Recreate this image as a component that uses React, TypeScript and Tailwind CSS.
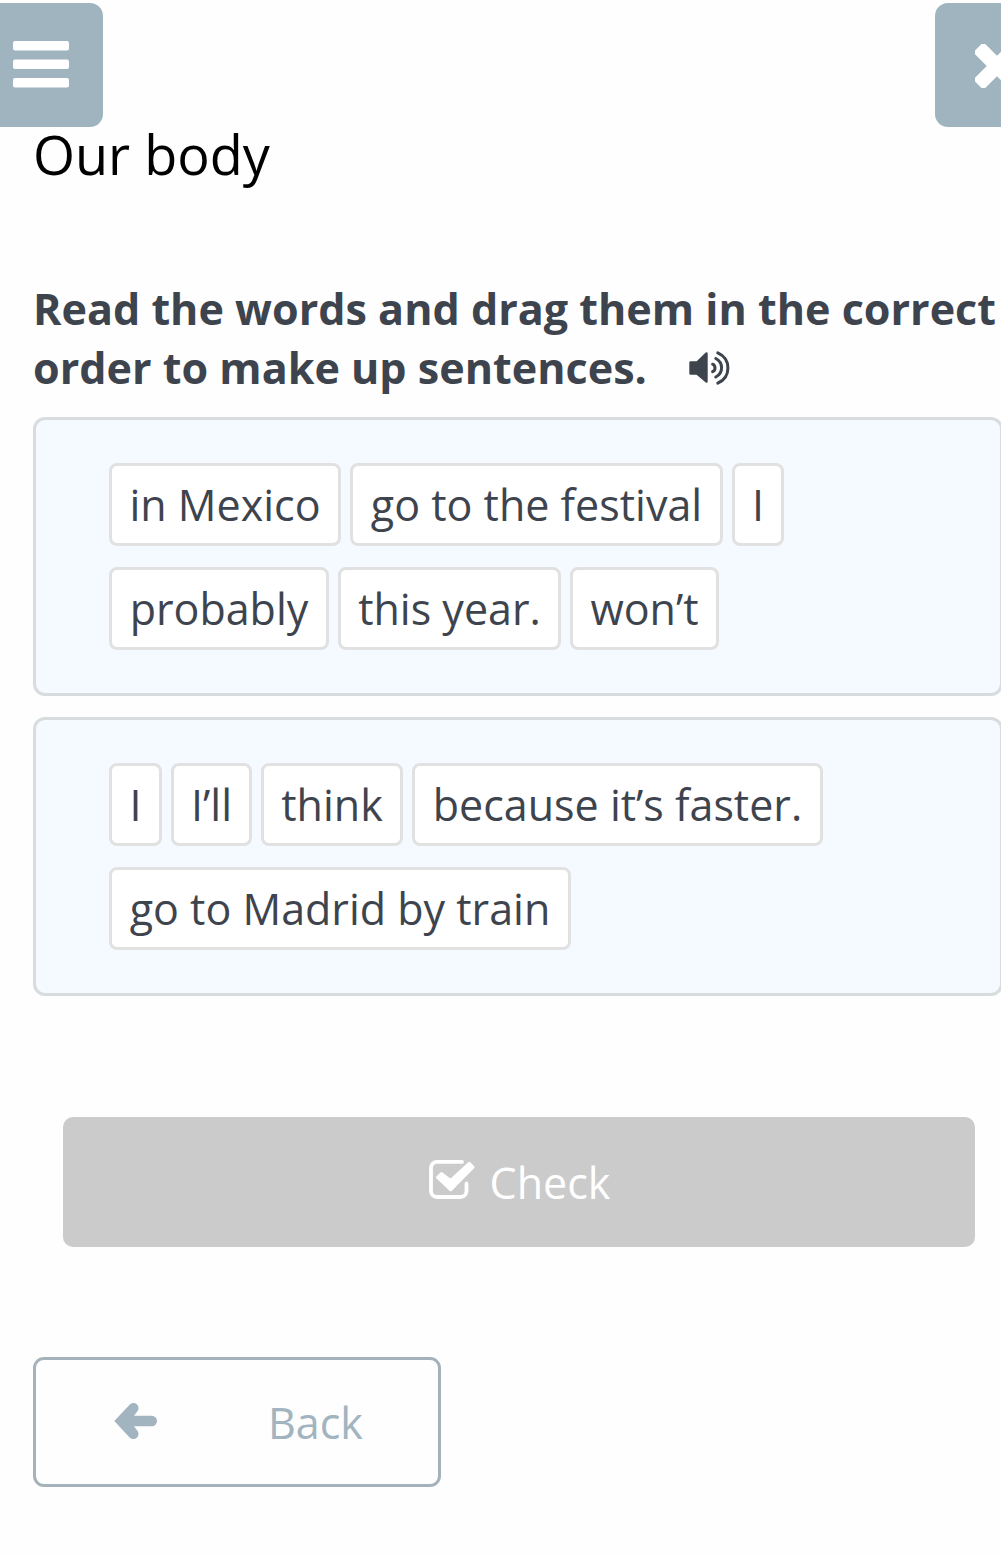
import React from "react";

type Chip = { text: string; width: string };

const exercises: Chip[][][] = [
  [
    [
      { text: "in Mexico", width: "w-[232px]" },
      { text: "go to the festival", width: "w-[373px]" },
      { text: "I", width: "w-[52px]" },
    ],
    [
      { text: "probably", width: "w-[220px]" },
      { text: "this year.", width: "w-[223px]" },
      { text: "won’t", width: "w-[149px]" },
    ],
  ],
  [
    [
      { text: "I", width: "w-[53px]" },
      { text: "I’ll", width: "w-[81px]" },
      { text: "think", width: "w-[142px]" },
      { text: "because it’s faster.", width: "w-[411px]" },
    ],
    [{ text: "go to Madrid by train", width: "w-[462px]" }],
  ],
];

function WordChip({ text, width }: Chip) {
  return (
    <div
      className={`${width} flex h-[82.5px] shrink-0 items-center justify-center rounded-lg border-3 border-[#e1e1e1] bg-white pt-[2px] text-[43px] leading-[60px] whitespace-nowrap`}
    >
      {text}
    </div>
  );
}

function MenuIcon() {
  return (
    <svg width="56" height="47" viewBox="0 0 56 47" fill="#fff">
      <rect y="0" width="56" height="9.5" rx="2" />
      <rect y="18.5" width="56" height="9.5" rx="2" />
      <rect y="37" width="56" height="9.5" rx="2" />
    </svg>
  );
}

function CloseIcon() {
  return (
    <svg width="44" height="44" viewBox="0 0 44 44" className="shrink-0" fill="#fff">
      <rect x="-4.5" y="14.8" width="53" height="14.4" rx="3" transform="rotate(45 22 22)" />
      <rect x="-4.5" y="14.8" width="53" height="14.4" rx="3" transform="rotate(-45 22 22)" />
    </svg>
  );
}

function SpeakerIcon() {
  return (
    <svg width="42" height="36" viewBox="0 0 42 36" fill="none" stroke="#3e444e" strokeLinecap="round" strokeWidth="3">
      <path d="M1.5 12.5H8L17.5 3.4V31.5L8 23.5H1.5Z" fill="#3e444e" strokeWidth="2.4" strokeLinejoin="round" />
      <path d="M23.6 14.2C26.8 15.5 26.8 20.3 23.6 21.7" />
      <path d="M26.8 8.5C34.5 12.5 34.5 23.3 26.8 27" />
      <path d="M28.8 2.8C42.3 8.8 42.3 27.2 28.8 33.2" />
    </svg>
  );
}

function CheckIcon() {
  return (
    <svg width="46" height="40" viewBox="0 0 46 40" fill="none" stroke="#fff">
      <path
        d="M33 1.9H8A6 6 0 0 0 2 7.9V31A6 6 0 0 0 8 37H31.5A6 6 0 0 0 37.5 31V23.5"
        strokeWidth="3.8"
        strokeLinecap="round"
      />
      <path d="M8.6 17.4 12.6 13.6 21.5 20.5 40.3 3.4 44 7.2 21.8 29.8Z" fill="#fff" strokeWidth="3" strokeLinejoin="round" />
    </svg>
  );
}

function ArrowLeftIcon() {
  return (
    <svg width="44" height="36" viewBox="0 0 44 36" fill="#a1b4c0">
      <path d="M.3 18 15.6 1.7A5 5 0 0 1 23.2 8.6L20 12.8H37.8A5 5 0 0 1 37.8 23.2H20L23.2 27.6A5 5 0 0 1 15.6 34.4Z" />
    </svg>
  );
}

export default function App() {
  return (
    <div className="flex h-[1554px] w-[1001px] flex-col overflow-hidden bg-[#fefefe] pt-[3px] font-['Open_Sans','Noto_Sans',sans-serif] text-[#3e444e]">
      <header className="flex h-[124px] shrink-0 justify-between">
        <button aria-label="Menu" className="flex w-[103px] items-start rounded-r-[13px] bg-[#a0b4c0] pt-[38px] pl-[13px]">
          <MenuIcon />
        </button>
        <button aria-label="Close" className="flex w-[66px] items-start overflow-hidden rounded-l-[13px] bg-[#a0b4c0] pt-[41px] pl-[39.5px]">
          <CloseIcon />
        </button>
      </header>
      <h1 className="h-[152px] shrink-0 pl-[33px] text-[54px] leading-[54px] whitespace-nowrap text-black">Our body</h1>
      <h2 className="h-[138px] shrink-0 pl-[33px] text-[43.1px] leading-[59px] font-bold whitespace-nowrap">
        <div>Read the words and drag them in the correct</div>
        <div className="flex items-center gap-[42px]">
          <span>order to make up sentences.</span>
          <SpeakerIcon />
        </div>
      </h2>
      <main className="flex shrink-0 flex-col gap-[21px] pl-[33px]">
        {exercises.map((rows, i) => (
          <section
            key={i}
            className="flex h-[279px] w-[970px] flex-col gap-[21.5px] rounded-xl border-3 border-[#d7dcde] bg-[#f4faff] pt-[43px] pl-[73px]"
          >
            {rows.map((chips, j) => (
              <div key={j} className="flex gap-[9px]">
                {chips.map((chip) => (
                  <WordChip key={chip.text} {...chip} />
                ))}
              </div>
            ))}
          </section>
        ))}
      </main>
      <button className="mt-[121px] ml-[63px] flex h-[130px] w-[912px] shrink-0 items-center justify-center gap-[15px] rounded-[10px] bg-[#cbcbcb] pl-px text-[43px] text-white">
        <span className="-mt-1">
          <CheckIcon />
        </span>
        <span className="pt-[2px]">Check</span>
      </button>
      <button className="mt-[110px] ml-[33px] flex h-[130px] w-[408px] shrink-0 items-center rounded-[11px] border-3 border-[#a5b2ba] pl-[78px] text-[43px] text-[#a1b4c0]">
        <span className="-mt-[2px]">
          <ArrowLeftIcon />
        </span>
        <span className="ml-[110px] pt-[2px]">Back</span>
      </button>
    </div>
  );
}
